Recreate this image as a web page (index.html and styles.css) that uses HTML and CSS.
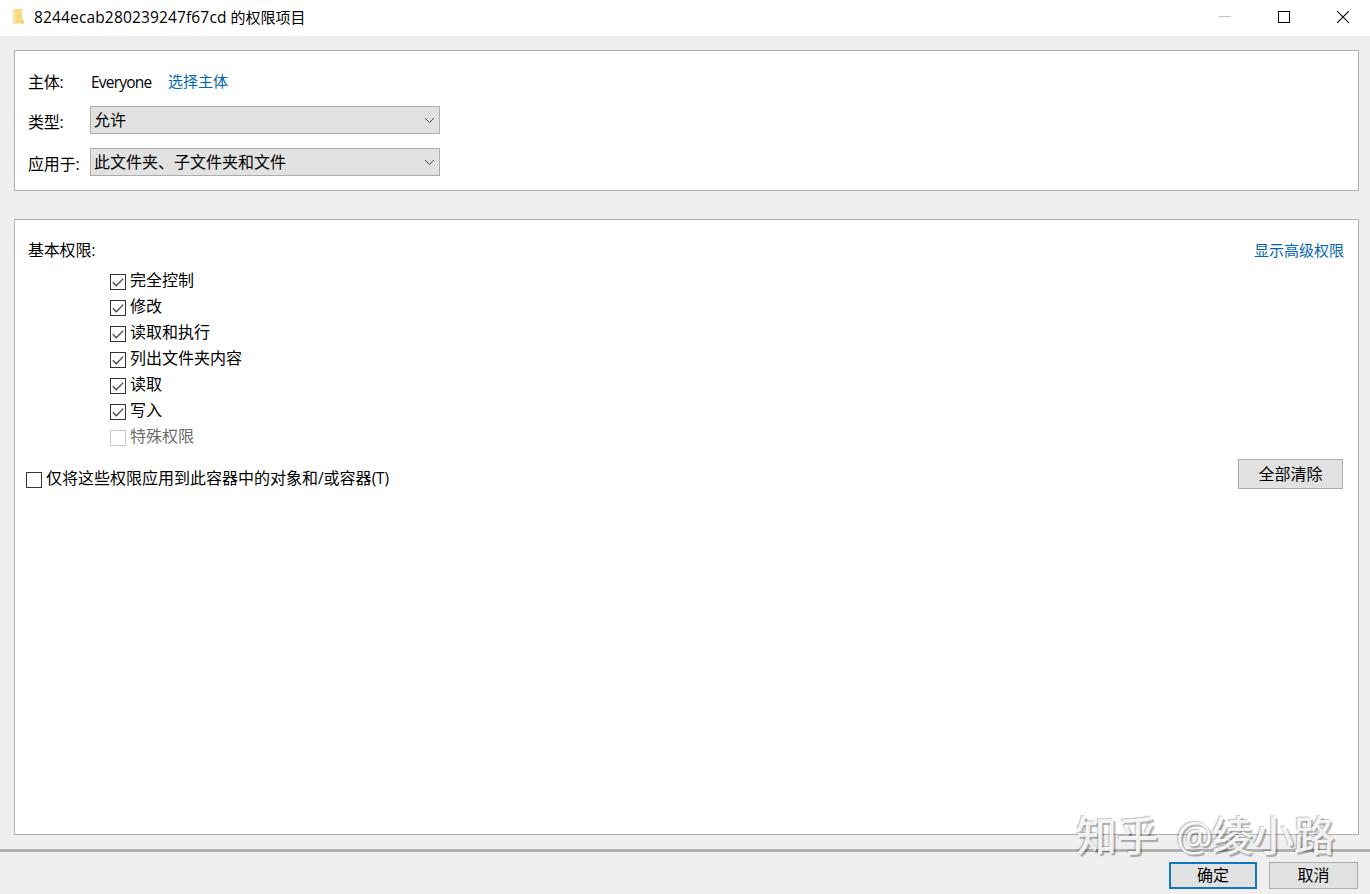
FILE: index.html
```html
<!DOCTYPE html>
<html lang="zh-CN">
<head>
    <meta charset="UTF-8">
    <meta name="viewport" content="width=device-width, initial-scale=1.0">
    <title>8244ecab280239247f67cd 的权限项目</title>
    <link rel="stylesheet" href="styles.css">
</head>
<body>
    <svg class="defs" width="0" height="0">
        <symbol id="tick" viewBox="0 0 14 14">
            <path d="M1.8 7.2 L5.3 10.7 L12.2 3.6" fill="none" stroke="#444" stroke-width="1.3"/>
        </symbol>
        <symbol id="chevron" viewBox="0 0 11 7">
            <path d="M1 1 L5.5 5.5 L10 1" fill="none" stroke="#444" stroke-width="1"/>
        </symbol>
    </svg>

    <header class="titlebar">
        <svg class="folder" width="12" height="18" viewBox="0 0 12 18">
            <path d="M1 1 H10 V12 L11.5 12.5 V15.5 H2 L1 14 Z" fill="#f9da80"/>
            <path d="M1 1 L3.4 2.5 V17 L1 15.5 Z" fill="#fbe6a2"/>
            <path d="M10 11 L11.5 12 V15.5 H10 Z" fill="#efc65c"/>
        </svg>
        <h1 class="title"><span class="title-id">8244ecab280239247f67cd</span> 的权限项目</h1>
        <div class="window-buttons">
            <svg width="12" height="12" viewBox="0 0 12 12"><path d="M0 5.5 H12" stroke="#c4c4c4"/></svg>
            <svg width="12" height="12" viewBox="0 0 12 12"><rect x="0.5" y="0.5" width="11" height="11" fill="none" stroke="#000"/></svg>
            <svg width="12" height="12" viewBox="0 0 12 12"><path d="M0 0 L12 12 M12 0 L0 12" stroke="#000" stroke-width="1.1"/></svg>
        </div>
    </header>

    <main class="content">
        <section class="panel principal">
            <span class="label label-first">主体:</span>
            <div class="who">
                <span class="name">Everyone</span>
                <a class="link">选择主体</a>
            </div>
            <span class="label">类型:</span>
            <div class="select"><span>允许</span><svg width="11" height="7"><use href="#chevron"/></svg></div>
            <span class="label">应用于:</span>
            <div class="select"><span>此文件夹、子文件夹和文件</span><svg width="11" height="7"><use href="#chevron"/></svg></div>
        </section>

        <section class="panel permissions">
            <div class="perm-head">
                <span class="perm-title">基本权限:</span>
                <a class="link">显示高级权限</a>
            </div>
            <ul class="perm-list">
                <li class="check"><span class="box"><svg width="14" height="14"><use href="#tick"/></svg></span><span class="text">完全控制</span></li>
                <li class="check"><span class="box"><svg width="14" height="14"><use href="#tick"/></svg></span><span class="text">修改</span></li>
                <li class="check"><span class="box"><svg width="14" height="14"><use href="#tick"/></svg></span><span class="text">读取和执行</span></li>
                <li class="check"><span class="box"><svg width="14" height="14"><use href="#tick"/></svg></span><span class="text">列出文件夹内容</span></li>
                <li class="check"><span class="box"><svg width="14" height="14"><use href="#tick"/></svg></span><span class="text">读取</span></li>
                <li class="check"><span class="box"><svg width="14" height="14"><use href="#tick"/></svg></span><span class="text">写入</span></li>
                <li class="check disabled"><span class="box"></span><span class="text">特殊权限</span></li>
            </ul>
            <div class="perm-foot">
                <div class="check"><span class="box"></span><span class="text">仅将这些权限应用到此容器中的对象和<span class="latin">/</span>或容器<span class="latin">(T)</span></span></div>
                <button class="btn btn-clear">全部清除</button>
            </div>
        </section>
    </main>

    <footer class="footer">
        <button class="btn btn-ok">确定</button>
        <button class="btn btn-cancel">取消</button>
    </footer>

    <div class="watermark"><span>知乎</span><span class="at">@</span><span>绫小路</span></div>
</body>
</html>
```
FILE: styles.css
```css
* {
    box-sizing: border-box;
}
body {
    margin: 0;
    height: 894px;
    display: flex;
    flex-direction: column;
    position: relative;
    overflow: hidden;
    background: #efefef;
    color: #000;
    font-family: "Open Sans", "Noto Sans CJK SC", sans-serif;
    font-size: 16px;
    line-height: 20px;
}
svg {
    display: block;
}
.defs {
    position: absolute;
}
.titlebar {
    height: 36px;
    flex: none;
    display: flex;
    align-items: center;
    padding: 0 21px 2px 12px;
    background: #fff;
}
.title {
    margin: 0 0 0 10px;
    font-size: 15px;
    font-weight: normal;
}
.title-id {
    font-size: 15.5px;
    letter-spacing: 0.15px;
}
.window-buttons {
    display: flex;
    gap: 47px;
    margin-left: auto;
}
.content {
    flex: 1;
    display: flex;
    flex-direction: column;
    gap: 28px;
    padding: 14px 11px 14px 14px;
}
.panel {
    background: #fff;
    border: 1px solid #b1b1b1;
}
.principal {
    height: 141px;
    display: grid;
    grid-template-columns: 62px 350px;
    grid-template-rows: 28px 28px 28px;
    row-gap: 14px;
    padding: 13px;
}
.label {
    align-self: center;
    padding-top: 4px;
    letter-spacing: -0.2px;
    white-space: nowrap;
}
.label-first {
    padding-top: 7px;
}
.who {
    display: flex;
    align-items: center;
    padding: 6px 0 0 1px;
}
.name {
    width: 77px;
    padding-top: 1px;
    font-size: 15.5px;
    letter-spacing: -0.8px;
}
.link {
    color: #0066b4;
    font-size: 15px;
}
.select {
    display: flex;
    align-items: center;
    justify-content: space-between;
    padding: 0 4px 0 3px;
    background: #e1e1e1;
    border: 1px solid #adadad;
}
.permissions {
    flex: 1;
    padding: 20px 14px 20px 13px;
}
.perm-head {
    display: flex;
    align-items: center;
    justify-content: space-between;
}
.perm-title {
    letter-spacing: -0.2px;
}
.perm-list {
    list-style: none;
    margin: 9px 0 0;
    padding: 0 0 0 82px;
}
.check {
    height: 26px;
    display: flex;
    align-items: center;
    gap: 4px;
}
.box {
    width: 16px;
    height: 16px;
    border: 1px solid #333;
}
.text {
    padding-bottom: 4px;
}
.disabled {
    color: #6d6d6d;
}
.disabled .box {
    border-color: #ccc;
}
.latin {
    font-size: 15.5px;
    letter-spacing: -0.1px;
}
.perm-foot {
    display: flex;
    justify-content: space-between;
    margin: 8px 1px 0 -2px;
}
.perm-foot .check {
    height: 42px;
}
.btn {
    padding: 0;
    background: #e1e1e1;
    border: 1px solid #adadad;
    color: #000;
    font: inherit;
}
.btn-clear {
    width: 105px;
    height: 30px;
}
.footer {
    height: 45px;
    flex: none;
    display: flex;
    gap: 12px;
    justify-content: flex-end;
    padding: 10px 12px 0 0;
    border-top: 3px solid #b1b1b1;
}
.footer .btn {
    height: 27px;
    padding-bottom: 2px;
}
.btn-ok {
    width: 88px;
    border: 2px solid #1177bb;
}
.btn-cancel {
    width: 89px;
}
.watermark {
    position: absolute;
    left: 1076px;
    top: 811px;
    display: flex;
    color: rgba(255, 255, 255, 0.9);
    font-size: 41px;
    font-weight: 500;
    line-height: 48px;
    text-shadow: -1px -1px 1px rgba(0, 0, 0, 0.25), 2px 2px 1px rgba(0, 0, 0, 0.3);
}
.at {
    margin: 0 -1px 0 18px;
}
```
